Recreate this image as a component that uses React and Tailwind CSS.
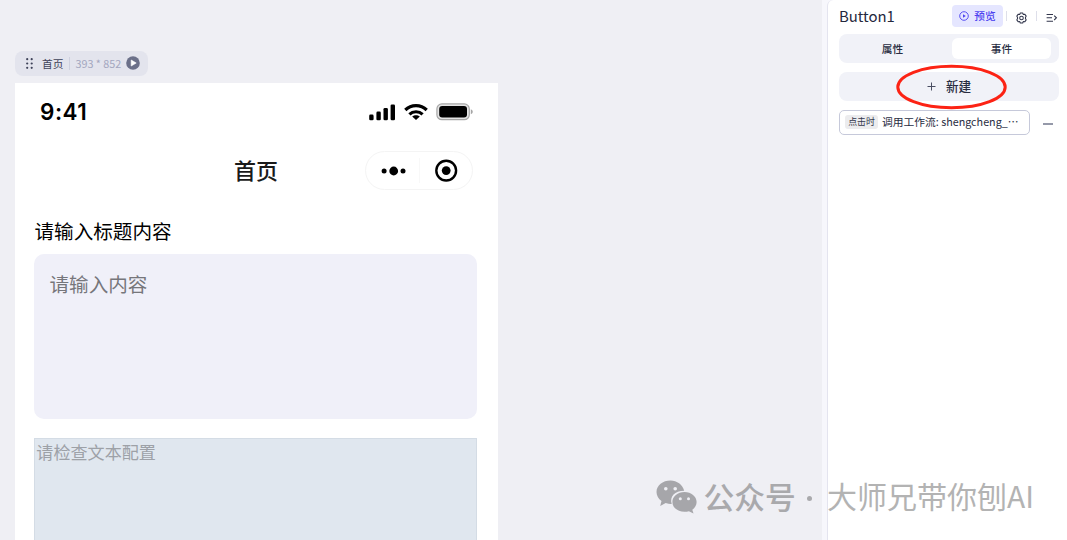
import React from 'react';

const SignalIcon = () => (
  <svg width="27" height="17" viewBox="0 0 27 17" fill="#000">
    <rect x="0.2" y="10.6" width="4.4" height="5.6" rx="1.3" />
    <rect x="7.4" y="7.6" width="4.4" height="8.6" rx="1.3" />
    <rect x="14.5" y="4" width="4.4" height="12.2" rx="1.3" />
    <rect x="21.6" y="0.4" width="4.4" height="15.8" rx="1.3" />
  </svg>
);

const WifiIcon = () => (
  <svg width="24" height="17" viewBox="0 0 24 17" fill="none" stroke="#000" strokeWidth="3.2">
    <path d="M1.3 6C7.2 0.2 16.8 0.2 22.7 6" />
    <path d="M5.4 10.3C9 6.9 15 6.9 18.6 10.3" />
    <path d="M12 16L8.2 12.6C10.3 10.8 13.7 10.8 15.8 12.6Z" fill="#000" stroke="none" />
  </svg>
);

const BatteryIcon = () => (
  <svg width="38" height="18" viewBox="0 0 38 18">
    <rect x="0.9" y="0.9" width="32.4" height="15.8" rx="5" fill="#e4e4e4" stroke="#a6a6a6" strokeWidth="1.2" />
    <rect x="3.2" y="3" width="27.8" height="11.6" rx="3" fill="#000" />
    <path d="M34.8 6.2C37.4 7.2 37.4 10.2 34.8 11.2Z" fill="#a6a6a6" />
  </svg>
);

const GearIcon = () => (
  <svg width="11" height="12" viewBox="0 0 22 24" fill="none" stroke="#32364c" strokeWidth="2.1" strokeLinejoin="round">
    <path d="M8.6 2H13.4L14.4 4.9L17.4 4.4L20.4 8.2L18.9 11V13L20.4 15.8L17.4 19.6L14.4 19.1L13.4 22H8.6L7.6 19.1L4.6 19.6L1.6 15.8L3.1 13V11L1.6 8.2L4.6 4.4L7.6 4.9Z" />
    <circle cx="11" cy="12" r="3.6" />
  </svg>
);

const CollapseIcon = () => (
  <svg width="12" height="10" viewBox="0 0 12 10" fill="none" stroke="#32364c" strokeWidth="1.1">
    <path d="M0.6 1.5H7M0.6 4.8H6M0.6 8.2H7M8.2 2.6L10.4 4.8L8.2 7" />
  </svg>
);

const WechatIcon = () => (
  <svg width="42" height="34" viewBox="0 0 42 34">
    <path
      d="M14.5 0.5C6.7 0.5 0.5 5.4 0.5 11.9C0.5 15.5 2.4 18.7 5.5 20.9L4.2 26L9.7 23.1C12 23.8 14 24 15.7 23.9C13.4 16.5 18.8 10.8 28.2 10.7C26.5 4.7 21 0.5 14.5 0.5Z"
      fill="#a6a6aa"
    />
    <path
      d="M28.5 11.9C21.7 11.9 16.4 16.4 16.4 21.9C16.4 27.5 21.7 31.8 28.5 31.8C30 31.8 31.5 31.6 32.9 31.2L37.5 33.5L36.3 29.7C39 27.8 40.6 25 40.6 21.9C40.6 16.4 35.2 11.9 28.5 11.9Z"
      fill="#a6a6aa"
    />
    <g fill="#efeff4">
      <circle cx="9.8" cy="8.8" r="1.8" />
      <circle cx="19.2" cy="8.8" r="1.8" />
      <circle cx="24.3" cy="18.7" r="1.5" />
      <circle cx="32.5" cy="18.7" r="1.5" />
    </g>
  </svg>
);

const FrameTag = () => (
  <div className="flex h-[25px] w-[133px] items-center rounded-lg bg-[#e3e4ed] pl-[11px]">
    <svg width="7" height="12" viewBox="0 0 7 12" fill="#3e4259">
      {[1.2, 5.5, 9.8].map((y) => (
        <g key={y}>
          <circle cx="1.2" cy={y} r="1.1" />
          <circle cx="5.7" cy={y} r="1.1" />
        </g>
      ))}
    </svg>
    <span className="ml-[9px] pt-px text-[10.7px] text-[#3e4259]">首页</span>
    <span className="ml-[6px] h-[13px] w-px bg-[#cfd1df]" />
    <span className="ml-[5px] w-[51px] text-[10.8px] whitespace-nowrap text-[#a3a7bf]">393 * 852</span>
    <svg className="mb-px" width="14" height="14" viewBox="0 0 14 14">
      <circle cx="7" cy="7" r="6.8" fill="#6b7089" />
      <path d="M5.2 4L10.2 7L5.2 10Z" fill="#fff" stroke="#fff" strokeWidth="0.6" strokeLinejoin="round" />
    </svg>
  </div>
);

const Phone = () => (
  <div className="mt-[7px] h-[457px] w-[482.5px] overflow-hidden bg-white">
    {/* Status bar */}
    <div className="flex h-[58px] items-center pl-[25px]">
      <span className="w-[329px] font-[Inter] text-[22.5px] font-semibold tracking-[0.5px] text-black">9:41</span>
      <SignalIcon />
      <span className="ml-[8px]"><WifiIcon /></span>
      <span className="ml-[8px]"><BatteryIcon /></span>
    </div>

    {/* Navigation */}
    <div className="flex h-[59px] items-center">
      <h1 className="w-[350px] pb-[2px] pl-[219px] text-[22px] font-medium text-[#1a1a1a]">首页</h1>
      <div className="flex h-[39px] w-[108px] items-center rounded-full border border-[#f4f4f4]">
        <div className="flex h-[25px] w-[54px] items-center justify-center border-r border-[#f8f8f8] pl-[2px]">
          <svg width="25" height="12" viewBox="0 0 25 12">
            <circle cx="3.1" cy="6" r="2.5" />
            <circle cx="12.7" cy="6" r="4.4" />
            <circle cx="22" cy="6" r="2.5" />
          </svg>
        </div>
        <div className="flex flex-1 justify-center">
          <svg width="24" height="24" viewBox="0 0 24 24">
            <circle cx="12.2" cy="11.6" r="9.9" fill="none" stroke="#000" strokeWidth="2.4" />
            <circle cx="12.2" cy="11.6" r="4.4" />
          </svg>
        </div>
      </div>
    </div>

    {/* Form */}
    <div className="flex flex-col pl-[19px] pr-[20.5px] pt-[18px]">
      <label className="h-[36px] pl-[0.5px] text-[19.6px] leading-[26px] text-black">请输入标题内容</label>
      <div className="h-[165px] rounded-[10px] bg-[#f0f0f9] px-[15.5px] py-[17px] text-[19.6px] leading-[26px] text-[#76767b]">
        请输入内容
      </div>
      <div className="mt-[19px] h-[120px] border border-[#d4dce5] bg-[#e0e7ef] pl-[1.3px] text-[17.1px] leading-[26px] text-[#9da1a7]">
        请检查文本配置
      </div>
    </div>
  </div>
);

const EventPanel = () => (
  <aside className="h-full w-[240px] rounded-tl-md border-l border-[#e4e4ef] bg-white pl-[11px] pr-2">
    <header className="flex h-[34px] items-center">
      <h2 className="w-[113px] pb-px text-[14.9px] text-[#24283d]">Button1</h2>
      <button className="mb-[2px] flex h-[22px] w-[51px] items-center justify-center rounded bg-[#e5e6ff] text-[10.7px] font-medium text-[#4d43f0]">
        <svg className="mr-[5px]" width="10" height="10" viewBox="0 0 10 10" fill="none" stroke="#4d43f0">
          <circle cx="5" cy="5" r="4.3" strokeWidth="0.9" />
          <path d="M4 3.2L6.8 5L4 6.8Z" fill="#4d43f0" stroke="none" />
        </svg>
        预览
      </button>
      <span className="ml-[3px] mb-[2px] h-[10px] w-px bg-[#dedfea]" />
      <span className="ml-[9px] pt-px"><GearIcon /></span>
      <span className="ml-[9px] mb-[2px] h-[10px] w-px bg-[#dedfea]" />
      <span className="ml-[9px] pt-px"><CollapseIcon /></span>
    </header>

    <div className="flex h-[29px] w-[220px] items-center rounded-lg bg-[#f1f2f8] text-[10.7px] font-medium text-[#292d42]">
      <button className="w-[107px] pt-px">属性</button>
      <button className="ml-[6px] h-[21px] w-[99px] rounded-md bg-white pt-px">事件</button>
    </div>

    <div className="relative mt-[9px]">
      <button className="flex h-[29px] w-[220px] items-center justify-center rounded-lg bg-[#f1f2f8] pb-px text-[12.6px] font-medium text-[#292d42]">
        <svg className="mr-[10px]" width="9" height="9" viewBox="0 0 9 9" stroke="#4a4e62" strokeWidth="1">
          <path d="M4.5 0.5V8.5M0.5 4.5H8.5" />
        </svg>
        新建
      </button>
      <svg className="pointer-events-none absolute -top-[9px] left-[57px]" width="111" height="47" viewBox="0 0 111 47" fill="none">
        <ellipse cx="55.5" cy="24" rx="53.7" ry="20.8" stroke="#fc2314" strokeWidth="3" />
      </svg>
    </div>

    <div className="mt-[9px] flex items-center">
      <div className="flex h-[25px] w-[191px] items-center rounded-[5px] border border-[#c6c9da] pl-[5px]">
        <span className="mb-px flex h-[14px] w-[33px] items-center justify-center rounded-[3px] bg-[#ececee] text-[8.9px] text-[#34384c]">点击时</span>
        <span className="ml-[4px] text-[10.75px] whitespace-nowrap text-[#292d42]">调用工作流: shengcheng_<span lang="zh-CN">…</span></span>
      </div>
      <span className="ml-[13px] mt-[2px] h-[2px] w-[10px] bg-[#9599a9]" />
    </div>
  </aside>
);

const Watermark = () => (
  <div className="absolute top-[476px] left-[655.5px] flex h-[42px] items-center whitespace-nowrap text-[#a9a9ac]">
    <WechatIcon />
    <span className="ml-[6px] pb-[2px] text-[30.8px] font-medium">公众号</span>
    <span className="ml-[11px] mr-[15px] mt-[2px] h-[5px] w-[5px] rounded-full bg-[#a9a9ac]" />
    <span className="pb-[4px] text-[30px] text-[#b3b3b3]">大师兄带你刨AI</span>
  </div>
);

export default function App() {
  return (
    <div className="relative flex h-[540px] w-[1067px] overflow-hidden bg-[#f7f7fc] font-['Noto_Sans_CJK_SC',sans-serif]">
      <main className="mr-[5px] w-[822px] bg-[#efeff4] pl-[15px] pt-[51px]">
        <FrameTag />
        <Phone />
      </main>
      <EventPanel />
      <Watermark />
    </div>
  );
}
